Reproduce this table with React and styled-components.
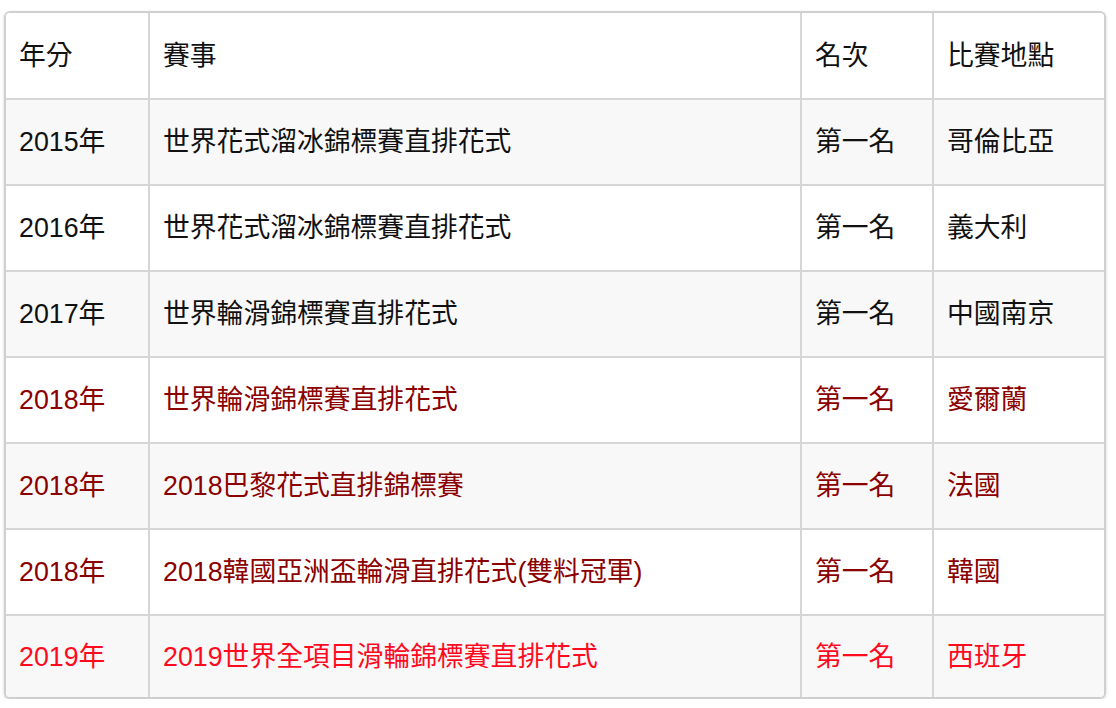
import React from 'react';
import styled, { createGlobalStyle } from 'styled-components';

const GlobalStyle = createGlobalStyle`
  *, *::before, *::after {
    box-sizing: border-box;
  }
  body {
    margin: 0;
    background: #fff;
    font-family: "Liberation Sans", "Noto Sans CJK TC", sans-serif;
  }
`;

const results = [
  { year: '2015年', event: '世界花式溜冰錦標賽直排花式', rank: '第一名', place: '哥倫比亞', tone: 'normal' },
  { year: '2016年', event: '世界花式溜冰錦標賽直排花式', rank: '第一名', place: '義大利', tone: 'normal' },
  { year: '2017年', event: '世界輪滑錦標賽直排花式', rank: '第一名', place: '中國南京', tone: 'normal' },
  { year: '2018年', event: '世界輪滑錦標賽直排花式', rank: '第一名', place: '愛爾蘭', tone: 'dark' },
  { year: '2018年', event: '2018巴黎花式直排錦標賽', rank: '第一名', place: '法國', tone: 'dark' },
  { year: '2018年', event: '2018韓國亞洲盃輪滑直排花式(雙料冠軍)', rank: '第一名', place: '韓國', tone: 'dark' },
  { year: '2019年', event: '2019世界全項目滑輪錦標賽直排花式', rank: '第一名', place: '西班牙', tone: 'bright' },
];

const toneColor = {
  normal: '#111',
  dark: '#8b0000',
  bright: '#ff0a1e',
};

const App = () => {
  return (
    <Page>
      <GlobalStyle />
      <Table>
        <colgroup>
          <col style={{ width: 144 }} />
          <col style={{ width: 652 }} />
          <col style={{ width: 132 }} />
          <col style={{ width: 170 }} />
        </colgroup>
        <thead>
          <tr>
            <HeadCell>年分</HeadCell>
            <HeadCell>賽事</HeadCell>
            <HeadCell>名次</HeadCell>
            <HeadCell>比賽地點</HeadCell>
          </tr>
        </thead>
        <tbody>
          {results.map((r, i) => (
            <Row key={i} $tone={r.tone}>
              <Cell>{r.year}</Cell>
              <Cell>{r.event}</Cell>
              <Cell>{r.rank}</Cell>
              <Cell>{r.place}</Cell>
            </Row>
          ))}
        </tbody>
      </Table>
    </Page>
  );
};

const Page = styled.div`
  padding: 10.5px 10px 0 4px;
`;

const Table = styled.table`
  width: 1102px;
  table-layout: fixed;
  border-collapse: separate;
  border-spacing: 0;
  border: 2px solid #cfcfcf;
  border-radius: 6px;
  box-shadow: 0 1px 3px rgba(0, 0, 0, 0.18);
  overflow: hidden;
  font-size: 26.8px;
`;

const HeadCell = styled.th`
  height: 87px;
  padding: 0 12px 4px 13px;
  text-align: left;
  font-weight: normal;
  color: #111;
  background: #fff;
  border-right: 2px solid #d6d6d6;
  border-bottom: 2px solid #d6d6d6;
  white-space: nowrap;

  &:last-child {
    border-right: none;
  }
`;

const Cell = styled.td`
  height: 86px;
  padding: 0 12px 4px 13px;
  border-right: 2px solid #d6d6d6;
  border-bottom: 2px solid #d6d6d6;
  white-space: nowrap;

  &:last-child {
    border-right: none;
  }
`;

const Row = styled.tr`
  color: ${({ $tone }) => toneColor[$tone]};
  background: #fff;

  &:nth-child(odd) {
    background: #f8f8f8;
  }

  &:last-child ${Cell} {
    height: 81px;
    border-bottom: none;
  }
`;

export default App;
